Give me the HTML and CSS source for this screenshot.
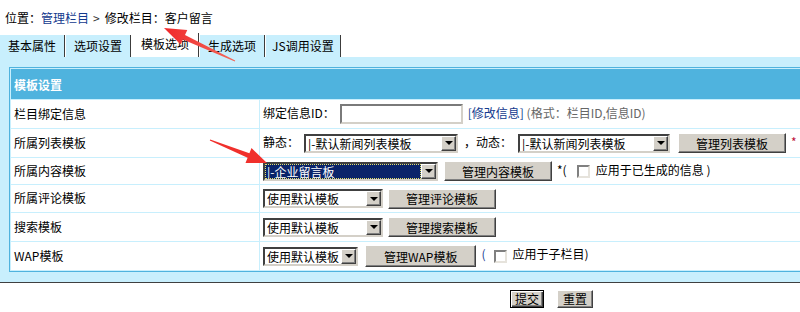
FILE: index.html
```html
<!DOCTYPE html>
<html lang="zh-CN">
<head>
    <meta charset="UTF-8">
    <meta name="viewport" content="width=device-width, initial-scale=1.0">
    <title>修改栏目</title>
    <link rel="stylesheet" href="styles.css">
</head>
<body>
    <div class="page">
        <div class="crumb">位置：<a class="link" href="#">管理栏目</a><span class="sep">&gt;</span>修改栏目：客户留言</div>

        <div class="tabs">
            <div class="tab">基本属性</div>
            <div class="tab">选项设置</div>
            <div class="tab active">模板选项</div>
            <div class="tab">生成选项</div>
            <div class="tab tab-js">JS调用设置</div>
        </div>

        <div class="panel">
            <table class="form-table">
                <tr class="h30"><th class="table-head" colspan="2">模板设置</th></tr>
                <tr class="h28">
                    <td class="label">栏目绑定信息</td>
                    <td class="field">绑定信息ID：<input class="text-input" type="text"><a class="link edit-link" href="#">[修改信息]</a> <span class="hint">(格式：栏目ID,信息ID)</span></td>
                </tr>
                <tr class="h28">
                    <td class="label">所属列表模板</td>
                    <td class="field">静态：<span class="combo w-list"><select><option>|-默认新闻列表模板</option></select><i class="drop"></i></span><span class="dyn">，动态：</span><span class="combo w-dyn"><select><option>|-默认新闻列表模板</option></select><i class="drop"></i></span><button class="btn btn-list">管理列表模板</button><span class="star">*</span></td>
                </tr>
                <tr class="h26">
                    <td class="label">所属内容模板</td>
                    <td class="field"><span class="combo w-content active"><select><option>|-企业留言板</option></select><i class="drop"></i></span><button class="btn btn-content">管理内容模板</button><span class="note">*(</span><input class="check check-content" type="checkbox"><span class="check-text">应用于已生成的信息 )</span></td>
                </tr>
                <tr class="h27">
                    <td class="label">所属评论模板</td>
                    <td class="field"><span class="combo w-def"><select><option>使用默认模板</option></select><i class="drop"></i></span><button class="btn btn-def">管理评论模板</button></td>
                </tr>
                <tr class="h28">
                    <td class="label">搜索模板</td>
                    <td class="field"><span class="combo w-def"><select><option>使用默认模板</option></select><i class="drop"></i></span><button class="btn btn-def">管理搜索模板</button></td>
                </tr>
                <tr class="h28">
                    <td class="label">WAP模板</td>
                    <td class="field"><span class="combo w-wap"><select><option>使用默认模板</option></select><i class="drop"></i></span><button class="btn btn-wap">管理WAP模板</button><span class="paren">(</span><input class="check check-wap" type="checkbox"><span class="check-text">应用于子栏目)</span></td>
                </tr>
            </table>
        </div>

        <div class="actions">
            <button class="btn btn-submit" type="submit">提交</button>
            <button class="btn btn-reset" type="reset">重置</button>
        </div>
    </div>

    <!-- red marker arrows drawn over the screenshot -->
    <svg class="marks" width="800" height="312" viewBox="0 0 800 312">
        <defs>
            <linearGradient id="redFade" x1="0" y1="0" x2="1" y2="0">
                <stop offset="0" stop-color="#f0282a"/>
                <stop offset="1" stop-color="#f36a5c"/>
            </linearGradient>
        </defs>
        <polygon fill="url(#redFade)" points="164,28 187.3,30 185,35 235.2,60.5 234.8,61.5 182.9,39.5 180.6,44.5"/>
        <polygon fill="#f0302c" points="267,163 251.5,148.1 249.4,153.2 210.2,139.5 209.8,140.5 247.6,157.8 245.5,162.9"/>
    </svg>
</body>
</html>
```

FILE: styles.css
```css
html, body{
    margin: 0px;
    padding: 0px;
    overflow: hidden;
    background-color: white;
}
body{
    font-family: "Noto Sans CJK SC", "Liberation Sans", sans-serif;
    font-size: 12px;
    color: #000;
}
.page{
    width: 1103px;
}
.link{
    color: #133a8e;
    text-decoration: none;
}

/* breadcrumb */
.crumb{
    height: 16px;
    line-height: 16px;
    padding: 10px 5px 7px;
}
.sep{
    margin: 0px 5px 0px 4px;
    color: #333;
}

/* tabs */
.tabs{
    display: flex;
    align-items: flex-end;
    gap: 1px;
    height: 24px;
}
.tab{
    height: 22px;
    line-height: 22px;
    padding: 0px 8px;
    background-color: #c8effd;
    border-right: 1px solid #3c3c3c;
}
.tab.active{
    height: 24px;
    line-height: 21px;
    padding: 0px 9px;
    background-color: white;
}
.tab-js{
    padding: 0px 6px;
}

/* blue panel with the form table */
.panel{
    background-color: #c8effd;
    padding: 10px 9px 10px;
    border-bottom: 1px solid #404040;
}
.form-table{
    width: 100%;
    border: 1px solid #4fb3de;
    border-spacing: 1px;
    background-color: #c8effd;
}
.form-table td, .form-table th{
    padding: 0px;
}
.h30{ height: 30px; }
.h28{ height: 28px; }
.h27{ height: 27px; }
.h26{ height: 26px; }
.table-head{
    background-color: #4fb3de;
    color: white;
    font-weight: bold;
    text-align: left;
    padding-left: 3px !important;
}
.label{
    width: 245px;
    background-color: white;
    padding-left: 3px !important;
    padding-bottom: 2px !important;
}
.field{
    background-color: white;
    padding-left: 3px !important;
    white-space: nowrap;
}

/* classic form controls */
.text-input{
    box-sizing: border-box;
    width: 123px;
    height: 20px;
    margin: 0px 0px 0px 5px;
    border: 2px solid;
    border-color: #7a7a7a #d4d0c8 #d4d0c8 #7a7a7a;
    vertical-align: middle;
    font: inherit;
}
.edit-link{
    margin-left: 5px;
}
.hint{
    color: #666;
}
.combo{
    box-sizing: border-box;
    display: inline-flex;
    align-items: center;
    height: 19px;
    border: 2px solid;
    border-color: #404040 #d4d0c8 #d4d0c8 #404040;
    background-color: white;
    vertical-align: middle;
}
.combo select{
    appearance: none;
    -webkit-appearance: none;
    flex: 1;
    min-width: 0px;
    height: 15px;
    border: none;
    padding: 0px 2px;
    margin: 0px;
    background-color: transparent;
    font: inherit;
    line-height: 15px;
    color: #000;
    outline: none;
}
.combo.active select{
    background-color: #0a246a;
    color: white;
    outline: 1px dotted #e8e36a;
    outline-offset: -1px;
}
.drop{
    box-sizing: border-box;
    display: flex;
    align-items: center;
    justify-content: center;
    width: 15px;
    height: 15px;
    background-color: #d4d0c8;
    border: 1px solid;
    border-color: #fff #404040 #404040 #fff;
    box-shadow: inset -1px -1px #808080;
}
.drop::before{
    content: "";
    border-left: 4px solid transparent;
    border-right: 4px solid transparent;
    border-top: 4px solid #000;
}
.w-list{ width: 154px; margin-left: 5px; }
.w-dyn{ width: 152px; margin-left: 6px; }
.w-content{ width: 175px; }
.w-def{ width: 120px; }
.w-wap{ width: 95px; }
.dyn{
    margin-left: 6px;
}
.btn{
    box-sizing: border-box;
    height: 20px;
    padding: 0px 17px;
    background-color: #d4d0c8;
    border: 1px solid;
    border-color: #fff #404040 #404040 #fff;
    box-shadow: inset -1px -1px #808080;
    font: inherit;
    color: #000;
    vertical-align: middle;
}
.btn-list{ margin-left: 8px; }
.btn-content{ margin-left: 6px; }
.btn-def{ margin-left: 5px; }
.btn-wap{
    height: 22px;
    margin-left: 7px;
    padding: 0px 18px;
}
.star{
    margin-left: 5px;
    color: #c0103a;
}
.note{
    margin-left: 5px;
}
.paren{
    margin-left: 5px;
    color: #1a3d8f;
}
.check{
    appearance: none;
    -webkit-appearance: none;
    box-sizing: border-box;
    width: 13px;
    height: 13px;
    margin: 0px;
    border: 2px solid;
    border-color: #808080 #e6e3dc #e6e3dc #808080;
    background-color: white;
    vertical-align: middle;
}
.check-content{ margin-left: 10px; }
.check-wap{ margin-left: 8px; }
.check-text{
    margin-left: 6px;
}

/* submit row */
.actions{
    margin-top: 7px;
    text-align: center;
    font-size: 0px;
}
.actions .btn{
    font-size: 12px;
    height: 18px;
    line-height: 14px;
}
.btn-submit{
    padding: 0px 4px;
    border: 1px solid #000;
    box-shadow: inset 1px 1px #fff, inset -1px -1px #404040, inset -2px -2px #808080;
}
.btn-reset{
    margin-left: 13px;
    padding: 0px 5px;
}

.marks{
    position: absolute;
    left: 0px;
    top: 0px;
    pointer-events: none;
}
```
